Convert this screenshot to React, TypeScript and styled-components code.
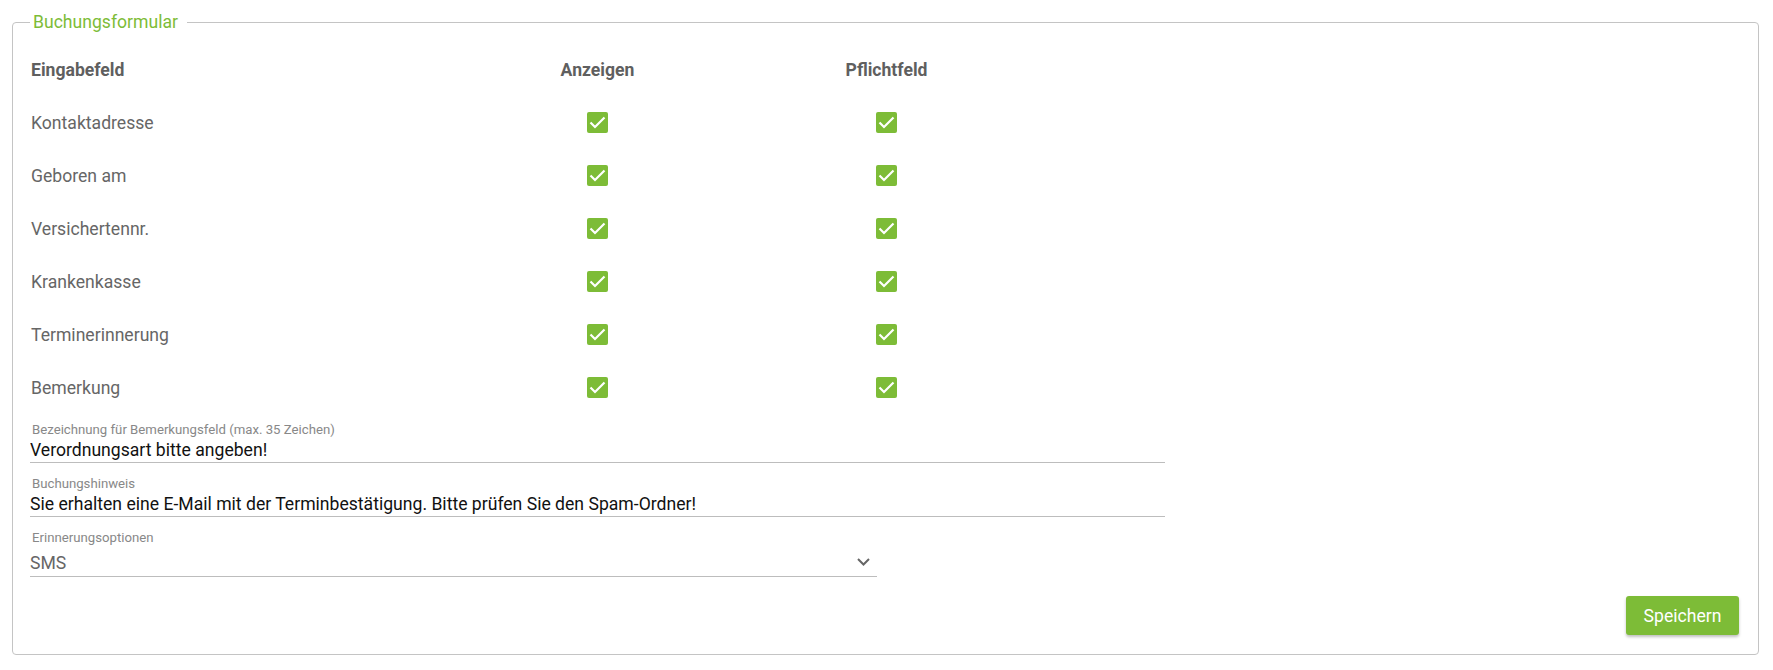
import React, { useState } from "react";
import styled, { createGlobalStyle } from "styled-components";

const GlobalStyle = createGlobalStyle`
html, body {
    margin: 0;
    padding: 0;
    background: #fff;
    font-family: Roboto, "Liberation Sans", sans-serif;
}
`;

const green = "#7dbc37";

const Page = styled.div`
    box-sizing: border-box;
    padding: 12px 14px 0 12px;
`;

const Fieldset = styled.fieldset`
    margin: 0;
    border: 1px solid #c4c4c4;
    border-radius: 4px;
    padding: 0 19px 19px 19px;
    display: flex;
    flex-direction: column;
`;

const Legend = styled.legend`
    color: ${green};
    font-size: 17.6px;
    line-height: 21px;
    padding: 0 9px 0 3px;
    margin-left: -2px;
`;

const Table = styled.div`
    display: grid;
    grid-template-columns: 422px 289px 289px;
    grid-auto-rows: 53px;
    margin-top: 10px;
    margin-left: -1px;
`;

const Cell = styled.div<{ $center?: boolean; $head?: boolean }>`
    display: flex;
    align-items: center;
    justify-content: ${(p) => (p.$center ? "center" : "flex-start")};
    font-size: 17.6px;
    font-weight: ${(p) => (p.$head ? 700 : 400)};
    color: ${(p) => (p.$head ? "#5f5f5f" : "#666")};
`;

const Box = styled.button<{ $checked: boolean }>`
    width: 21px;
    height: 21px;
    padding: 0;
    border: none;
    border-radius: 2px;
    background: ${(p) => (p.$checked ? green : "#fff")};
    box-shadow: ${(p) => (p.$checked ? "none" : "inset 0 0 0 2px #999")};
    display: flex;
    align-items: center;
    justify-content: center;
    cursor: pointer;
`;

const Field = styled.label<{ $width: number }>`
    display: flex;
    flex-direction: column;
    width: ${(p) => p.$width}px;
    margin: 8px 0 0 -2px;
    & + & {
        margin-top: 13px;
    }
`;

const FieldLabel = styled.span`
    font-size: 13.2px;
    line-height: 15px;
    color: #888;
    padding-left: 2px;
    margin-bottom: 3px;
`;

const Input = styled.input`
    font-family: Roboto, "Liberation Sans", sans-serif;
    font-size: 17.6px;
    line-height: 20px;
    height: 23px;
    box-sizing: border-box;
    color: #111;
    border: none;
    border-bottom: 1px solid #bdbdbd;
    padding: 0 0 3px 0;
    outline: none;
    background: transparent;
`;

const SelectWrap = styled.div`
    position: relative;
    border-bottom: 1px solid #bdbdbd;
    padding: 5px 0 3px 0;
`;

const Select = styled.select`
    appearance: none;
    width: 100%;
    font-family: Roboto, "Liberation Sans", sans-serif;
    font-size: 17.6px;
    line-height: 20px;
    height: 20px;
    color: #666;
    border: none;
    padding: 0;
    background: transparent;
    outline: none;
`;

const Chevron = styled.svg`
    position: absolute;
    right: 7px;
    top: 10px;
    pointer-events: none;
`;

const Footer = styled.div`
    display: flex;
    justify-content: flex-end;
    margin-top: 19px;
`;

const SaveButton = styled.button`
    width: 113px;
    height: 39px;
    border: none;
    border-radius: 3px;
    background: ${green};
    color: #fff;
    font-family: Roboto, "Liberation Sans", sans-serif;
    font-size: 17.6px;
    box-shadow: 0 2px 3px rgba(0, 0, 0, 0.25);
    cursor: pointer;
`;

const Check = ({ checked, onClick }: { checked: boolean; onClick: () => void }) => (
    <Box $checked={checked} onClick={onClick} type="button">
        {checked && (
            <svg width="17" height="13" viewBox="0 0 17 13">
                <path d="M1.5 6.5 L6 11 L15.5 1.5" fill="none" stroke="#fff" strokeWidth="2.2" />
            </svg>
        )}
    </Box>
);

const fields = ["Kontaktadresse", "Geboren am", "Versichertennr.", "Krankenkasse", "Terminerinnerung", "Bemerkung"];

export default function App() {
    const [show, setShow] = useState(fields.map(() => true));
    const [required, setRequired] = useState(fields.map(() => true));

    const toggle = (list: boolean[], set: (v: boolean[]) => void, i: number) => {
        set(list.map((v, j) => (j === i ? !v : v)));
    };

    return (
        <Page>
            <GlobalStyle />
            <Fieldset>
                <Legend>Buchungsformular</Legend>
                <Table>
                    <Cell $head>Eingabefeld</Cell>
                    <Cell $head $center>Anzeigen</Cell>
                    <Cell $head $center>Pflichtfeld</Cell>
                    {fields.map((name, i) => (
                        <React.Fragment key={name}>
                            <Cell>{name}</Cell>
                            <Cell $center>
                                <Check checked={show[i]} onClick={() => toggle(show, setShow, i)} />
                            </Cell>
                            <Cell $center>
                                <Check checked={required[i]} onClick={() => toggle(required, setRequired, i)} />
                            </Cell>
                        </React.Fragment>
                    ))}
                </Table>
                <Field $width={1135}>
                    <FieldLabel>Bezeichnung für Bemerkungsfeld (max. 35 Zeichen)</FieldLabel>
                    <Input defaultValue="Verordnungsart bitte angeben!" maxLength={35} />
                </Field>
                <Field $width={1135}>
                    <FieldLabel>Buchungshinweis</FieldLabel>
                    <Input defaultValue="Sie erhalten eine E-Mail mit der Terminbestätigung. Bitte prüfen Sie den Spam-Ordner!" />
                </Field>
                <Field $width={847}>
                    <FieldLabel>Erinnerungsoptionen</FieldLabel>
                    <SelectWrap>
                        <Select defaultValue="sms">
                            <option value="sms">SMS</option>
                            <option value="email">E-Mail</option>
                            <option value="none">Keine</option>
                        </Select>
                        <Chevron width="13" height="8" viewBox="0 0 13 8">
                            <path d="M1 1 L6.5 6.5 L12 1" fill="none" stroke="#666" strokeWidth="2" />
                        </Chevron>
                    </SelectWrap>
                </Field>
                <Footer>
                    <SaveButton type="button">Speichern</SaveButton>
                </Footer>
            </Fieldset>
        </Page>
    );
}
